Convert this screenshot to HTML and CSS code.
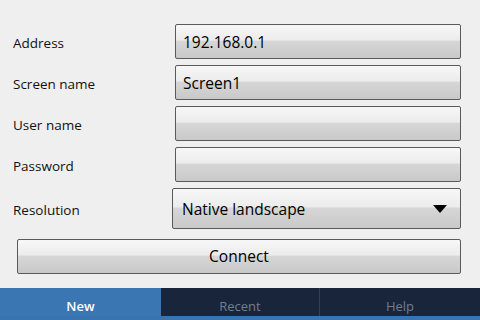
FILE: index.html
```html
<!DOCTYPE html>
<html lang="en">
<head>
    <meta charset="UTF-8">
    <title>Remote Screen</title>
    <link rel="stylesheet" href="styles.css">
</head>
<body>
    <div class="screen">
        <!-- Connection form -->
        <form class="form">
            <label class="label">Address</label>
            <div class="field">192.168.0.1</div>

            <label class="label">Screen name</label>
            <div class="field">Screen1</div>

            <label class="label">User name</label>
            <div class="field"></div>

            <label class="label">Password</label>
            <div class="field"></div>

            <label class="label">Resolution</label>
            <div class="field select">
                <span>Native landscape</span>
                <span class="arrow"></span>
            </div>
        </form>

        <button class="connect" type="button">Connect</button>

        <!-- Bottom tabs -->
        <nav class="tabs">
            <a href="#" class="tab active">New</a>
            <a href="#" class="tab">Recent</a>
            <a href="#" class="tab">Help</a>
        </nav>
    </div>
</body>
</html>
```

FILE: styles.css
```css
* {
    margin: 0;
    padding: 0;
    box-sizing: border-box;
}

body {
    width: 480px;
    height: 320px;
    overflow: hidden;
    background: #efefef;
    font-family: 'Open Sans', 'DejaVu Sans', sans-serif;
    color: #111;
}

.screen {
    display: flex;
    flex-direction: column;
    height: 320px;
}

/* Form */
.form {
    display: grid;
    grid-template-columns: 175px 286px;
    grid-template-rows: 35px 35px 35px 35px 41px;
    row-gap: 6px;
    margin-top: 24px;
}

.label {
    display: flex;
    align-items: center;
    padding-left: 13px;
    padding-top: 2px;
    font-size: 13.5px;
    color: #111;
}

.field {
    display: flex;
    align-items: center;
    padding: 0 7px;
    font-size: 15.5px;
    color: #000;
    border: 1px solid #5a5a5a;
    border-radius: 2px;
    background: linear-gradient(to bottom, #f7f7f7 0%, #ececec 45%, #d6d6d6 50%, #c9c9c9 100%);
}

.select {
    margin-left: -3px;
    justify-content: space-between;
    padding-left: 9px;
    padding-right: 13px;
}

.arrow {
    width: 0;
    height: 0;
    border-left: 7px solid transparent;
    border-right: 7px solid transparent;
    border-top: 8px solid #000;
}

/* Connect button */
.connect {
    width: 444px;
    height: 35px;
    margin: 10px 0 0 17px;
    padding-bottom: 2px;
    font-family: 'Open Sans', 'DejaVu Sans', sans-serif;
    font-size: 15.5px;
    color: #000;
    border: 1px solid #5a5a5a;
    border-radius: 2px;
    background: linear-gradient(to bottom, #f7f7f7 0%, #ececec 45%, #d6d6d6 50%, #c9c9c9 100%);
}

/* Tabs */
.tabs {
    display: flex;
    margin-top: 14px;
    height: 32px;
    background: #18253a;
    border-bottom: 4px solid #3a74b0;
}

.tab {
    flex: 1;
    display: flex;
    align-items: center;
    justify-content: center;
    padding-top: 7px;
    font-size: 13px;
    color: #737e8c;
    text-decoration: none;
    border-left: 1px solid #34404f;
}

.tab:first-child {
    border-left: none;
}

.tab.active {
    flex: 0 0 161px;
    color: #fff;
    background: #3a76b2;
    font-weight: 600;
}

.tab.active + .tab {
    border-left: none;
}

.tab:last-child {
    flex: 0 0 161px;
}
```
